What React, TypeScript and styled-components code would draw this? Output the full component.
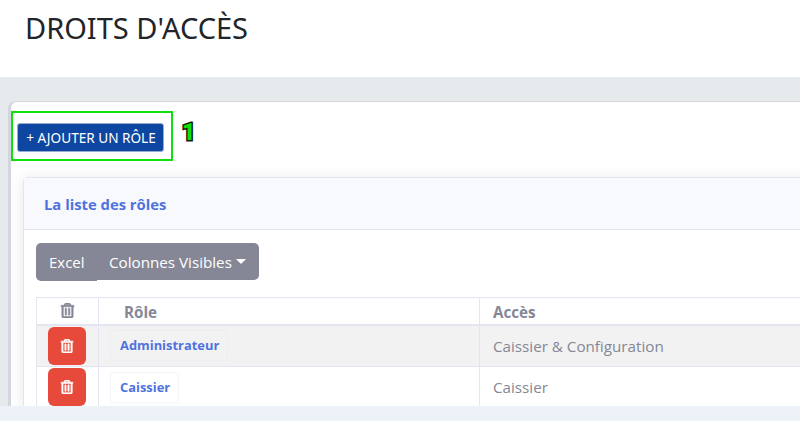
import { createGlobalStyle, styled } from "styled-components";
import { FaRegTrashAlt } from "react-icons/fa";

const Global = createGlobalStyle`
html, body {
  margin: 0;
  padding: 0;
  background: #fff;
}
* {
  box-sizing: border-box;
}
`;

const App = () => {
  return (
    <Page>
      <Global />
      <Header>
        <Title>DROITS D'ACCÈS</Title>
      </Header>
      <Body>
        <Panel>
          <Toolbar>
            <Highlight>
              <AddButton>+ AJOUTER UN RÔLE</AddButton>
            </Highlight>
            <Step>1</Step>
          </Toolbar>
          <Card>
            <CardHeader>La liste des rôles</CardHeader>
            <CardBody>
              <ButtonGroup>
                <ExcelButton>Excel</ExcelButton>
                <ColumnsButton>
                  Colonnes Visibles
                  <Caret />
                </ColumnsButton>
              </ButtonGroup>
              <Table>
                <thead>
                  <tr>
                    <HeadCell $icon>
                      <Trash size={15} />
                    </HeadCell>
                    <HeadCell $indent>Rôle</HeadCell>
                    <HeadCell>Accès</HeadCell>
                  </tr>
                </thead>
                <tbody>
                  <Row $striped>
                    <ActionCell $tall>
                      <DeleteButton>
                        <Trash size={14} />
                      </DeleteButton>
                    </ActionCell>
                    <RoleCell>
                      <RoleLink>Administrateur</RoleLink>
                    </RoleCell>
                    <AccessCell>Caissier &amp; Configuration</AccessCell>
                  </Row>
                  <Row>
                    <ActionCell>
                      <DeleteButton>
                        <Trash size={14} />
                      </DeleteButton>
                    </ActionCell>
                    <RoleCell>
                      <RoleLink>Caissier</RoleLink>
                    </RoleCell>
                    <AccessCell>Caissier</AccessCell>
                  </Row>
                </tbody>
              </Table>
            </CardBody>
          </Card>
        </Panel>
      </Body>
      <Footer />
    </Page>
  );
};

export default App;

const Trash = styled(FaRegTrashAlt)`
  stroke: currentColor;
  stroke-width: 22px;
`;

const Page = styled.div`
  width: 800px;
  height: 421px;
  display: flex;
  flex-direction: column;
  overflow: hidden;
  font-family: "Open Sans", "Noto Sans", sans-serif;
`;

const Header = styled.div`
  height: 77px;
  flex: none;
  background: #fff;
  padding: 9px 0 0 25px;
`;

const Title = styled.h1`
  margin: 0;
  font-family: "Noto Sans", "Open Sans", sans-serif;
  font-size: 29px;
  line-height: 38px;
  font-weight: 400;
  color: #212529;
`;

const Body = styled.div`
  flex: 1;
  min-height: 0;
  background: #e7eaed;
  padding: 24px 0 0 8px;
  overflow: hidden;
`;

const Panel = styled.div`
  width: 800px;
  height: 320px;
  background: #fff;
  border-left: 3px solid #d3d6dc;
  border-top: 1px solid #d3d6dc;
  border-top-left-radius: 8px;
  padding: 9px 0 0 0;
`;

const Toolbar = styled.div`
  display: flex;
  align-items: flex-start;
  height: 66px;
`;

const Highlight = styled.div`
  width: 162px;
  height: 50px;
  border: 2px solid #0ee00e;
  padding: 10px 0 0 4px;
`;

const AddButton = styled.button`
  display: block;
  width: 147px;
  height: 29px;
  padding: 0 0 0 1px;
  border: 1px solid #9aa9cf;
  border-radius: 3px;
  background: #0d47a1;
  color: #fff;
  font-family: "Noto Sans", sans-serif;
  font-size: 13.600px;
  white-space: nowrap;
`;

const Step = styled.span`
  margin: 7px 0 0 9px;
  font-family: "Roboto", sans-serif;
  font-size: 23px;
  line-height: 30px;
  font-weight: 900;
  color: #0ee00e;
  -webkit-text-stroke: 3px #0b1a0b;
  paint-order: stroke fill;
`;

const Card = styled.div`
  width: 800px;
  margin-left: 12px;
  background: #fff;
  border: 1px solid #e3e6f0;
  border-top-left-radius: 5px;
  box-shadow: 0 2px 14px rgba(58, 59, 69, 0.12);
`;

const CardHeader = styled.div`
  height: 52px;
  padding: 0 0 0 20px;
  display: flex;
  align-items: center;
  background: #f8f9fc;
  border-bottom: 1px solid #e3e6f0;
  font-size: 14.800px;
  font-weight: 700;
  color: #4e73df;
`;

const CardBody = styled.div`
  padding: 13px 0 0 12px;
`;

const ButtonGroup = styled.div`
  display: flex;
  align-items: flex-start;
  height: 37px;
  margin-bottom: 17px;
`;

const ExcelButton = styled.button`
  width: 61px;
  height: 38px;
  padding: 0 0 0 13px;
  border: none;
  border-radius: 5px 0 0 5px;
  background: #858796;
  color: #fff;
  font-family: "Open Sans", sans-serif;
  font-size: 15px;
  text-align: left;
`;

const ColumnsButton = styled.button`
  width: 162px;
  height: 37px;
  display: flex;
  align-items: center;
  padding: 0 0 0 12px;
  border: none;
  border-radius: 0 5px 5px 0;
  background: #858796;
  color: #fff;
  font-family: "Open Sans", sans-serif;
  font-size: 15.200px;
  white-space: nowrap;
`;

const Caret = styled.span`
  margin-left: 4px;
  border-top: 5px solid #fff;
  border-left: 5px solid transparent;
  border-right: 5px solid transparent;
`;

const Table = styled.table`
  width: 800px;
  border-collapse: collapse;
  table-layout: fixed;
  color: #858796;
  font-size: 15.200px;
`;

const HeadCell = styled.th<{ $icon?: boolean; $indent?: boolean }>`
  height: 27px;
  padding: 2px 0 0 ${(p) => (p.$indent ? "25px" : p.$icon ? "0" : "13px")};
  width: ${(p) => (p.$icon ? "62px" : p.$indent ? "381px" : "auto")};
  text-align: ${(p) => (p.$icon ? "center" : "left")};
  vertical-align: middle;
  font-weight: 700;
  border: 1px solid #e3e6f0;
  border-bottom-width: 2px;
`;

const Row = styled.tr<{ $striped?: boolean }>`
  background: ${(p) => (p.$striped ? "#f2f2f2" : "#fff")};
`;

const ActionCell = styled.td<{ $tall?: boolean }>`
  padding: 1px 0 0 11px;
  height: ${(p) => (p.$tall ? "42px" : "41px")};
  vertical-align: top;
  border: 1px solid #e3e6f0;
`;

const DeleteButton = styled.button`
  width: 38px;
  height: 38px;
  padding: 0;
  border: none;
  border-radius: 6px;
  background: #e74a3b;
  color: #fff;
  display: flex;
  align-items: center;
  justify-content: center;
`;

const RoleCell = styled.td`
  padding: 0 0 0 11px;
  border: 1px solid #e3e6f0;
`;

const RoleLink = styled.span`
  display: inline-block;
  height: 31px;
  line-height: 29px;
  padding: 0 8px 0 9px;
  border: 1px solid rgba(227, 230, 240, 0.45);
  border-radius: 3px;
  font-size: 12.900px;
  font-weight: 700;
  color: #4e73df;
`;

const AccessCell = styled.td`
  padding: 0 0 0 13px;
  border: 1px solid #e3e6f0;
`;

const Footer = styled.div`
  height: 15px;
  flex: none;
  background: #edf1f8;
`;
